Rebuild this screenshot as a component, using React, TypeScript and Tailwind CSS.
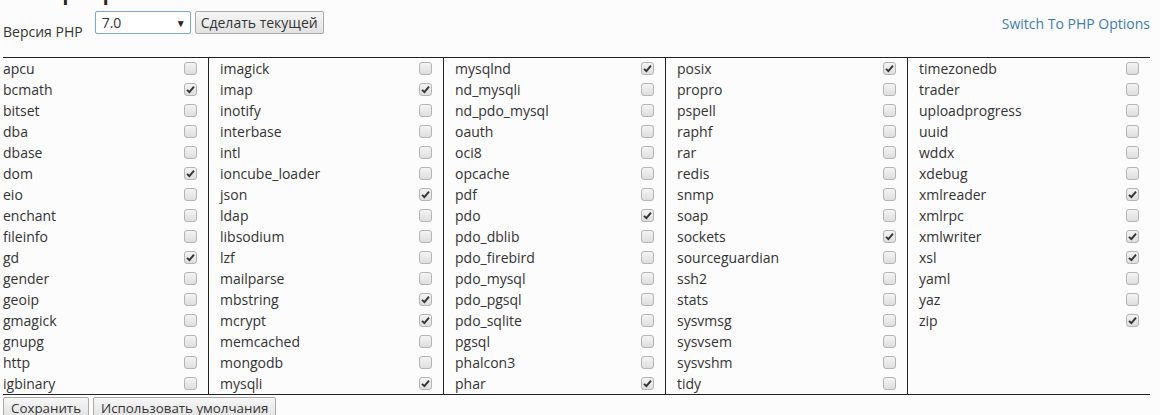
import React from "react";

type Item = [string, boolean] | null;

const cols: Item[][] = [
  [["apcu", false], ["bcmath", true], ["bitset", false], ["dba", false], ["dbase", false], ["dom", true], ["eio", false], ["enchant", false], ["fileinfo", false], ["gd", true], ["gender", false], ["geoip", false], ["gmagick", false], ["gnupg", false], ["http", false], ["igbinary", false]],
  [["imagick", false], ["imap", true], ["inotify", false], ["interbase", false], ["intl", false], ["ioncube_loader", false], ["json", true], ["ldap", false], ["libsodium", false], ["lzf", false], ["mailparse", false], ["mbstring", true], ["mcrypt", true], ["memcached", false], ["mongodb", false], ["mysqli", true]],
  [["mysqlnd", true], ["nd_mysqli", false], ["nd_pdo_mysql", false], ["oauth", false], ["oci8", false], ["opcache", false], ["pdf", false], ["pdo", true], ["pdo_dblib", false], ["pdo_firebird", false], ["pdo_mysql", false], ["pdo_pgsql", false], ["pdo_sqlite", false], ["pgsql", false], ["phalcon3", false], ["phar", true]],
  [["posix", true], ["propro", false], ["pspell", false], ["raphf", false], ["rar", false], ["redis", false], ["snmp", false], ["soap", false], ["sockets", true], ["sourceguardian", false], ["ssh2", false], ["stats", false], ["sysvmsg", false], ["sysvsem", false], ["sysvshm", false], ["tidy", false]],
  [["timezonedb", false], ["trader", false], ["uploadprogress", false], ["uuid", false], ["wddx", false], ["xdebug", false], ["xmlreader", true], ["xmlrpc", false], ["xmlwriter", true], ["xsl", true], ["yaml", false], ["yaz", false], ["zip", true], null, null, null],
];

const widths = ["w-[205px]", "w-[235px]", "w-[222px]", "w-[242px]", "w-[243px]"];

function Box({ checked }: { checked: boolean }) {
  return (
    <span className="flex h-[13px] w-[13px] items-center justify-center rounded-[3px] border border-[#b4b4b4] bg-gradient-to-b from-[#f4f4f4] to-[#dedede]">
      {checked && (
        <svg width="9" height="9" viewBox="0 0 9 9">
          <path d="M1 4.8 L3.4 7.2 L8 1.6" fill="none" stroke="#333" strokeWidth="1.9" />
        </svg>
      )}
    </span>
  );
}

export default function App() {
  return (
    <div className="min-h-[415px] w-[1160px] overflow-hidden bg-[#fcfcfc] text-[14px] text-[#333] [font-family:'Open_Sans',sans-serif]">
      <div className="h-[5px] overflow-hidden pl-[10px]">
        <div className="-mt-[19px] text-[19px] font-bold leading-[24px] text-[#222]">Выбор версии PHP</div>
      </div>
      <div className="flex h-[52px] items-start justify-between pl-[3px] pr-[10px] pt-[6px]">
        <div className="flex items-start">
          <span className="mr-[12px] mt-[11px] leading-[20px]">Версия PHP</span>
          <div className="flex h-[23px] w-[96px] items-center justify-between rounded-[2px] border border-[#7ea6d6] bg-white pl-[6px] pr-[4px]">
            <span className="leading-[18px]">7.0</span>
            <span className="text-[10px] leading-none text-[#222]">▼</span>
          </div>
          <button className="ml-[4px] h-[23px] rounded-[2px] border border-[#aaa] bg-gradient-to-b from-[#f6f6f6] to-[#e2e2e2] px-[5px] leading-[20px] text-[#333]">
            Сделать текущей
          </button>
        </div>
        <a className="mt-[4px] leading-[18px] text-[#3d7db5]">Switch To PHP Options</a>
      </div>
      <div className="ml-[3px] flex w-[1147px] border-y border-[#222]">
        {cols.map((col, ci) => (
          <div key={ci} className={`${widths[ci]} ${ci > 0 ? "border-l border-[#222] pl-[11px]" : ""} pr-[11px]`}>
            {col.map((it, ri) => (
              <div key={ri} className="flex h-[21px] items-center justify-between">
                {it ? (
                  <>
                    <span className="leading-[21px]">{it[0]}</span>
                    <Box checked={it[1]} />
                  </>
                ) : null}
              </div>
            ))}
          </div>
        ))}
      </div>
      <div className="flex gap-[4px] pl-[3px] pt-[2px]">
        <button className="h-[22px] rounded-[2px] border border-[#aaa] bg-gradient-to-b from-[#f6f6f6] to-[#e2e2e2] px-[7px] text-[13.33px] leading-[20px] text-[#333]">
          Сохранить
        </button>
        <button className="h-[22px] rounded-[2px] border border-[#aaa] bg-gradient-to-b from-[#f6f6f6] to-[#e2e2e2] px-[7px] text-[13.33px] leading-[20px] text-[#333]">
          Использовать умолчания
        </button>
      </div>
    </div>
  );
}
